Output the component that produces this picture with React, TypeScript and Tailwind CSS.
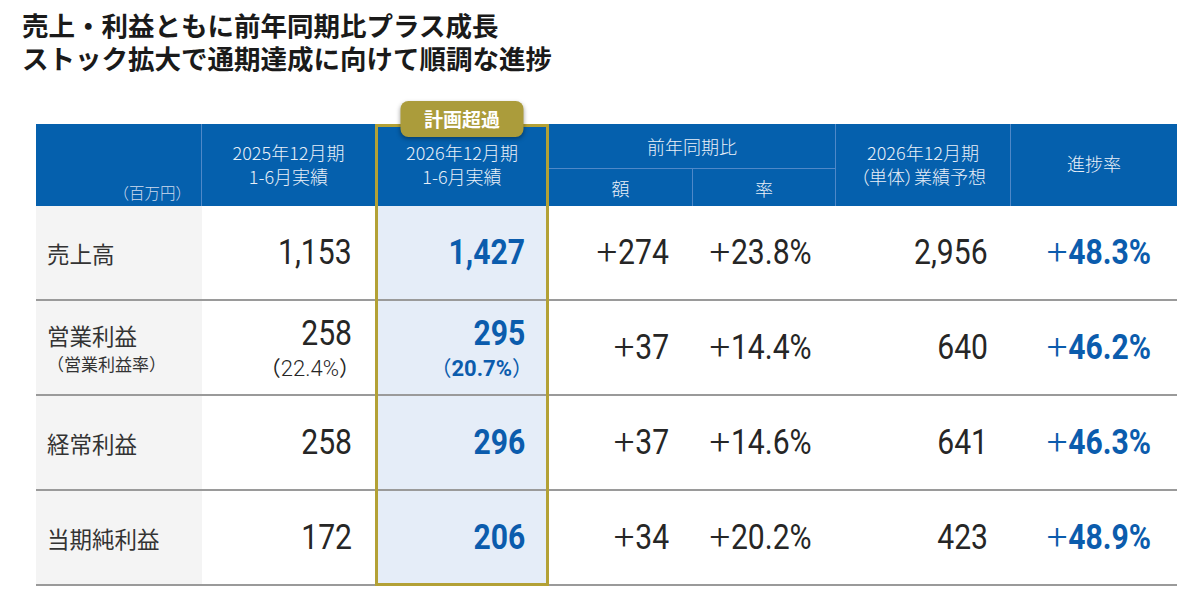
import React from "react";

const JP = "font-['Noto_Sans_CJK_JP','Noto_Sans',sans-serif]";
const RB = "font-['Roboto','Liberation_Sans',sans-serif]";

type Row = {
  label: string;
  sub?: string;
  prev: string;
  prevSub?: string;
  cur: string;
  curSub?: string;
  diff: string;
  rate: string;
  plan: string;
  prog: string;
};

const rows: Row[] = [
  { label: "売上高", prev: "1,153", cur: "1,427", diff: "274", rate: "23.8%", plan: "2,956", prog: "48.3%" },
  {
    label: "営業利益",
    sub: "（営業利益率）",
    prev: "258",
    prevSub: "22.4%",
    cur: "295",
    curSub: "20.7%",
    diff: "37",
    rate: "14.4%",
    plan: "640",
    prog: "46.2%",
  },
  { label: "経常利益", prev: "258", cur: "296", diff: "37", rate: "14.6%", plan: "641", prog: "46.3%" },
  { label: "当期純利益", prev: "172", cur: "206", diff: "34", rate: "20.2%", plan: "423", prog: "48.9%" },
];

const HEAD = `bg-[#0560ad] text-[#e8eff8] ${JP} text-[18px] leading-[24px] font-light`;
const BODY = "border-b-2 border-[#9a9a9a]";

function Num({ children, bold }: { children: React.ReactNode; bold?: boolean }) {
  return (
    <span
      className={`inline-block whitespace-nowrap origin-right scale-x-[0.86] ${RB} text-[35px] leading-[38px] ${
        bold ? "font-bold" : "font-normal"
      }`}
    >
      {children}
    </span>
  );
}

function Plus() {
  return (
    <span className="inline-block origin-center scale-x-[1.22] mx-[3px] font-light">+</span>
  );
}

export default function App() {
  return (
    <div className="w-[1200px] h-[608px] bg-white overflow-hidden">
      <div className={`pl-[22px] pt-[8px] ${JP} font-bold text-[26.5px] leading-[33px] text-[#1a1a1a]`}>
        <div>売上・利益ともに前年同期比プラス成長</div>
        <div>ストック拡大で通期達成に向けて順調な進捗</div>
      </div>

      <div className="relative ml-[36px] mt-[50px] w-[1141px]">
        <div className="grid grid-cols-[166px_173px_174px_144px_143px_175px_166px] grid-rows-[45px_37px_95px_95px_95px_95px]">
          {/* header */}
          <div className={`${HEAD} row-span-2 border-r border-[#4f88c8] flex items-end justify-end pr-[10px] pb-[5px]`}>
            <span className="text-[15.5px] leading-[18px] text-[#cfdcef]">（百万円）</span>
          </div>
          <div className={`${HEAD} row-span-2 flex flex-col items-center justify-center pb-[2px]`}>
            <div>2025年12月期</div>
            <div>1-6月実績</div>
          </div>
          <div className={`${HEAD} row-span-2 flex flex-col items-center justify-center pb-[2px]`}>
            <div>2026年12月期</div>
            <div>1-6月実績</div>
          </div>
          <div className={`${HEAD} col-span-2 border-b border-r border-[#4f88c8] flex items-center justify-center`}>
            前年同期比
          </div>
          <div className={`${HEAD} row-span-2 border-r border-[#4f88c8] flex flex-col items-center justify-center pb-[2px]`}>
            <div>2026年12月期</div>
            <div className="[font-feature-settings:'palt']">（単体）業績予想</div>
          </div>
          <div className={`${HEAD} row-span-2 flex items-center justify-center pb-[4px]`}>進捗率</div>
          <div className={`${HEAD} border-r border-[#4f88c8] flex items-center justify-center`}>額</div>
          <div className={`${HEAD} border-r border-[#4f88c8] flex items-center justify-center`}>率</div>

          {/* body */}
          {rows.map((r) => (
            <React.Fragment key={r.label}>
              <div className={`${BODY} bg-[#f4f4f4] flex flex-col justify-center pl-[11px] ${JP} text-[#333]`}>
                <div className="text-[22.5px] leading-[30px]">{r.label}</div>
                {r.sub && <div className="text-[17px] leading-[24px] mt-[2px]">{r.sub}</div>}
              </div>
              <div className={`${BODY} flex flex-col justify-center items-end pr-[23px] text-[#262626]`}>
                <Num>{r.prev}</Num>
                {r.prevSub && (
                  <div className="whitespace-nowrap text-[21px] leading-[24px] mr-[-8px] mt-[2px]">
                    <span className={JP}>（</span>
                    <span className={`${RB} font-light text-[22px]`}>{r.prevSub}</span>
                    <span className={JP}>）</span>
                  </div>
                )}
              </div>
              <div className={`${BODY} bg-[#e5edf8] flex flex-col justify-center items-end pr-[24px] text-[#0b5cad]`}>
                <Num bold>{r.cur}</Num>
                {r.curSub && (
                  <div className="whitespace-nowrap text-[21px] leading-[24px] mr-[-8px] mt-[2px]">
                    <span className={JP}>（</span>
                    <span className={`${RB} font-bold text-[22px]`}>{r.curSub}</span>
                    <span className={JP}>）</span>
                  </div>
                )}
              </div>
              <div className={`${BODY} flex items-center justify-end pr-[24px] text-[#262626]`}>
                <Num>
                  <Plus />
                  {r.diff}
                </Num>
              </div>
              <div className={`${BODY} flex items-center justify-end pr-[24px] text-[#262626]`}>
                <Num>
                  <Plus />
                  {r.rate}
                </Num>
              </div>
              <div className={`${BODY} flex items-center justify-end pr-[23px] text-[#262626]`}>
                <Num>{r.plan}</Num>
              </div>
              <div className={`${BODY} flex items-center justify-end pr-[26px] text-[#0b5cad]`}>
                <Num>
                  <Plus />
                  <span className="font-bold">{r.prog}</span>
                </Num>
              </div>
            </React.Fragment>
          ))}
        </div>

        {/* highlight frame */}
        <div className="absolute left-[339px] top-0 w-[174px] h-[462px] border-[3px] border-[#b3a136] pointer-events-none">
          <div
            className={`absolute left-1/2 -translate-x-1/2 top-[-26px] w-[123px] h-[36px] rounded-[8px] bg-[#ab9c3b] shadow-[0_2px_4px_rgba(0,0,0,0.35)] flex items-center justify-center text-white ${JP} font-bold text-[19px]`}
          >
            計画超過
          </div>
        </div>
      </div>
    </div>
  );
}
